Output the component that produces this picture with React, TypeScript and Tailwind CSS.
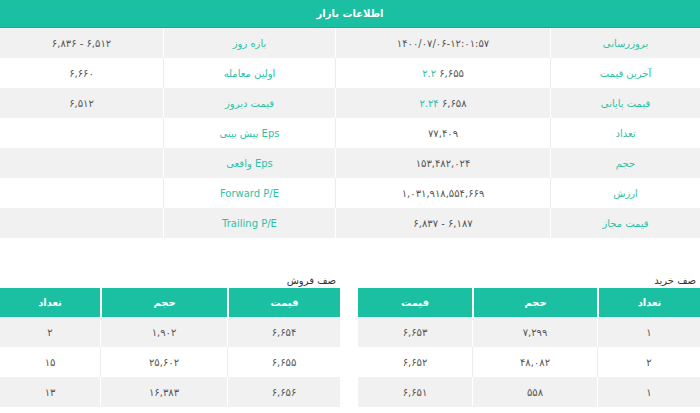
const info = [
  {
    l1: "بروزرسانی",
    v1: <span dir="ltr">۱۴۰۰/۰۷/۰۶-۱۲:۰۱:۵۷</span>,
    l2: "بازه روز",
    v2: <span dir="ltr">۶,۸۳۶ - ۶,۵۱۲</span>,
  },
  {
    l1: "آخرین قیمت",
    v1: (
      <span dir="ltr">
        <span className="text-[#2fc1a4]">۲.۲</span> ۶,۶۵۵
      </span>
    ),
    l2: "اولین معامله",
    v2: "۶,۶۶۰",
  },
  {
    l1: "قیمت پایانی",
    v1: (
      <span dir="ltr">
        <span className="text-[#2fc1a4]">۲.۲۴</span> ۶,۶۵۸
      </span>
    ),
    l2: "قیمت دیروز",
    v2: "۶,۵۱۲",
  },
  { l1: "تعداد", v1: "۷۷,۴۰۹", l2: "Eps پیش بینی", v2: "" },
  { l1: "حجم", v1: "۱۵۳,۴۸۲,۰۲۴", l2: "Eps واقعی", v2: "" },
  { l1: "ارزش", v1: "۱,۰۳۱,۹۱۸,۵۵۴,۶۶۹", l2: "Forward P/E", v2: "" },
  { l1: "قیمت مجاز", v1: <span dir="ltr">۶,۸۳۷ - ۶,۱۸۷</span>, l2: "Trailing P/E", v2: "" },
];

const buy = [
  ["۱", "۷,۲۹۹", "۶,۶۵۳"],
  ["۲", "۴۸,۰۸۲", "۶,۶۵۲"],
  ["۱", "۵۵۸", "۶,۶۵۱"],
];

const sell = [
  ["۶,۶۵۴", "۱,۹۰۲", "۲"],
  ["۶,۶۵۵", "۲۵,۶۰۲", "۱۵"],
  ["۶,۶۵۶", "۱۶,۳۸۳", "۱۳"],
];

function Queue({
  title,
  heads,
  rows,
  cols,
  width,
}: {
  title: string;
  heads: string[];
  rows: string[][];
  cols: string;
  width: string;
}) {
  return (
    <div className={width}>
      <div className="h-[14px] pr-1 text-[10px] leading-[14px] text-[#333]">{title}</div>
      <div className={`grid ${cols} h-[29px] bg-[#1bbfa2] text-[10px] font-bold text-white`}>
        {heads.map((h, i) => (
          <div key={i} className="flex items-center justify-center border-l-2 border-white last:border-l-0">
            {h}
          </div>
        ))}
      </div>
      {rows.map((r, ri) => (
        <div
          key={ri}
          className={`grid ${cols} h-[30px] text-[10px] text-[#555] ${ri % 2 === 0 ? "bg-[#f1f1f1]" : "bg-white"}`}
        >
          {r.map((c, ci) => (
            <div
              key={ci}
              className={`flex items-center justify-center border-l last:border-l-0 ${
                ri % 2 === 0 ? "border-white" : "border-[#ececec]"
              }`}
            >
              {c}
            </div>
          ))}
        </div>
      ))}
    </div>
  );
}

export default function App() {
  return (
    <div dir="rtl" className="w-[700px] h-[413px] bg-white overflow-hidden" style={{ fontFamily: '"DejaVu Sans", sans-serif' }}>
      {/* market info */}
      <div className="h-[28px] bg-[#1bbfa2] border-b border-[#15ae93] flex items-center justify-center text-[10px] font-bold text-white">
        اطلاعات بازار
      </div>
      {info.map((r, i) => (
        <div
          key={i}
          className={`grid grid-cols-[150px_215px_172px_163px] h-[30px] text-[10px] ${
            i % 2 === 0 ? "bg-[#f1f1f1]" : "bg-white"
          }`}
        >
          {[r.l1, r.v1, r.l2, r.v2].map((c, ci) => (
            <div
              key={ci}
              className={`flex items-center justify-center border-l last:border-l-0 ${
                i % 2 === 0 ? "border-white" : "border-[#ececec]"
              } ${ci % 2 === 0 ? "text-[#2fc1a4]" : "text-[#555]"}`}
            >
              {c}
            </div>
          ))}
        </div>
      ))}

      {/* order queues */}
      <div className="flex gap-[18px] mt-[36px]">
        <Queue
          title="صف خرید"
          heads={["تعداد", "حجم", "قیمت"]}
          rows={buy}
          cols="grid-cols-[103px_125px_114px]"
          width="w-[342px]"
        />
        <Queue
          title="صف فروش"
          heads={["قیمت", "حجم", "تعداد"]}
          rows={sell}
          cols="grid-cols-[113px_127px_100px]"
          width="w-[340px]"
        />
      </div>
    </div>
  );
}
